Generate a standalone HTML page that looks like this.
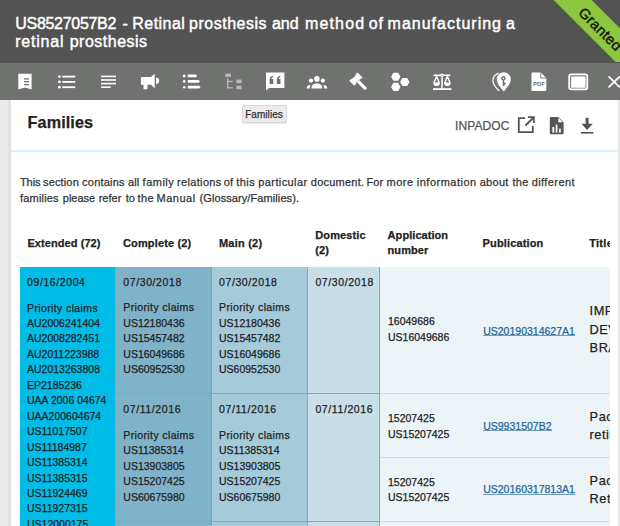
<!DOCTYPE html>
<html><head><meta charset="utf-8"><style>
html,body{margin:0;padding:0;}
body{width:620px;height:526px;overflow:hidden;position:relative;background:#fff;font-family:"Liberation Sans",sans-serif;color:#333;}
.t{position:absolute;white-space:nowrap;-webkit-text-stroke:0.25px currentColor;}
.r{position:absolute;}
</style></head><body>
<div class="r" style="left:0px;top:0px;width:620px;height:63px;background:#535353;"></div>
<div class="r" style="left:0;top:0;width:620px;height:62px;overflow:hidden"><div class="r" style="left:540px;top:14px;width:120px;height:27.4px;background:#8cc63e;transform:rotate(45deg);transform-origin:50% 50%"></div><div class="t" style="left:550px;top:20.5px;width:100px;text-align:center;font-size:14.5px;line-height:17px;color:#111;letter-spacing:0.3px;-webkit-text-stroke:0.4px #111;transform:rotate(45deg);transform-origin:50% 50%">Granted</div></div>
<div class="t" style="left:15.3px;top:13.56px;font-size:16px;line-height:19px;color:#fff;letter-spacing:-0.3px;-webkit-text-stroke:0.45px #fff;">US8527057B2</div>
<div class="t" style="left:122.5px;top:13.56px;font-size:16px;line-height:19px;color:#fff;-webkit-text-stroke:0.45px #fff;">-</div>
<div class="t" style="left:132.3px;top:13.56px;font-size:16px;line-height:19px;color:#fff;letter-spacing:0.45px;-webkit-text-stroke:0.45px #fff;">Retinal</div>
<div class="t" style="left:189.1px;top:13.56px;font-size:16px;line-height:19px;color:#fff;letter-spacing:0.5px;-webkit-text-stroke:0.45px #fff;">prosthesis</div>
<div class="t" style="left:271.9px;top:13.56px;font-size:16px;line-height:19px;color:#fff;-webkit-text-stroke:0.45px #fff;">and</div>
<div class="t" style="left:305.0px;top:13.56px;font-size:16px;line-height:19px;color:#fff;letter-spacing:1.15px;-webkit-text-stroke:0.45px #fff;">method</div>
<div class="t" style="left:368.7px;top:13.56px;font-size:16px;line-height:19px;color:#fff;letter-spacing:0.8px;-webkit-text-stroke:0.45px #fff;">of</div>
<div class="t" style="left:387.6px;top:13.56px;font-size:16px;line-height:19px;color:#fff;letter-spacing:1.0px;-webkit-text-stroke:0.45px #fff;">manufacturing</div>
<div class="t" style="left:506.0px;top:13.56px;font-size:16px;line-height:19px;color:#fff;-webkit-text-stroke:0.45px #fff;">a</div>
<div class="t" style="left:15.2px;top:31.76px;font-size:16px;line-height:19px;color:#fff;letter-spacing:0.8px;-webkit-text-stroke:0.45px #fff;">retinal</div>
<div class="t" style="left:69.7px;top:31.76px;font-size:16px;line-height:19px;color:#fff;letter-spacing:0.5px;-webkit-text-stroke:0.45px #fff;">prosthesis</div>
<div class="r" style="left:0px;top:62.5px;width:620px;height:37px;background:#70726f;"></div>
<svg class="r" style="left:0;top:0" width="620" height="100" viewBox="0 0 620 100"><path d="M18.3 73.7h13.3v15.9l-6.65-2.2-6.65 2.2z" fill="#fff"/><path d="M24 78.2h5v1.4h-5zM24 80.9h5v1.4h-5zM24 83.9h5v1.4h-5z" fill="#6f716f"/><g fill="#fff"><circle cx="59.4" cy="76.6" r="1.35"/><circle cx="59.4" cy="81.9" r="1.35"/><circle cx="59.4" cy="87.2" r="1.35"/><rect x="62.2" y="75.7" width="13" height="1.8"/><rect x="62.2" y="81" width="13" height="1.8"/><rect x="62.2" y="86.3" width="13" height="1.8"/></g><g fill="#fff"><rect x="101" y="75.6" width="15" height="1.6"/><rect x="101" y="79.2" width="15" height="1.6"/><rect x="101" y="82.8" width="15" height="1.6"/><rect x="101" y="86.4" width="9.6" height="1.6"/></g><g fill="#fff"><path d="M141.8 77.1h9.2l3.4-3.2h0.3v14.1h-0.3l-3.4-3.2h-3.6v3.6q0 .9-.9 .9h-2.1q-.9 0-.9-.9v-3.6h-1.7q-.9 0-.9-.9v-5.9q0-.9.9-.9z"/><path d="M156.1 77.5q3.1 0.3 3.1 3.3t-3.1 3.3z"/></g><g fill="#fff"><circle cx="184.2" cy="75.9" r="1.3"/><circle cx="184.2" cy="81.4" r="1.3"/><circle cx="184.2" cy="87.2" r="1.3"/><path d="M187.8 74.5h8l1.4 1.4-1.4 1.4h-8zM187.8 80h10.8l1.4 1.4-1.4 1.4h-10.8zM187.8 85.8h11.4l1.4 1.4-1.4 1.4h-11.4z"/></g><g fill="#b9bab9"><rect x="225.3" y="73.6" width="5.6" height="3.2"/><rect x="227" y="78.4" width="1.3" height="10"/><rect x="227" y="80.8" width="5.6" height="1.2"/><rect x="227" y="87.2" width="5.6" height="1.2"/><rect x="236.4" y="79.6" width="5.2" height="3.6"/><rect x="236.4" y="85.6" width="5.2" height="3.6"/></g><path d="M266 72.5h18.4v15.5h-15.3l-3.1 2.6z" fill="#fff"/><g fill="#6f716f"><path d="M269.6 84v-4.5q0-3.2 3.6-3.8v1.3q-1.7.4-1.8 2h1.9v5zM276.8 84v-4.5q0-3.2 3.6-3.8v1.3q-1.7.4-1.8 2h1.9v5z"/></g><g fill="#fff"><circle cx="316.9" cy="78.9" r="2.8"/><circle cx="311" cy="80.6" r="2.1"/><circle cx="322.8" cy="80.6" r="2.1"/><path d="M311.4 88.4q0-4.8 5.5-4.8t5.5 4.8z"/><path d="M306.6 88.4q0-3 3.4-3.4l0.3 0.1q-0.6 1.5-0.6 3.3z"/><path d="M327.2 88.4q0-3-3.4-3.4l-0.3 0.1q0.6 1.5 0.6 3.3z"/></g><g fill="#fff" transform="translate(355.9 79.1) rotate(-45)"><path d="M-5.9 -3.6h1.9q1.2 .9 4 .9t4-.9h1.9v7.2h-1.9q-1.2-.9-4-.9t-4 .9h-1.9z"/><rect x="-1.55" y="2.8" width="3.1" height="11.6" rx="0.9"/></g><path d="M400.50 76.80 L398.15 80.87 L393.45 80.87 L391.10 76.80 L393.45 72.73 L398.15 72.73ZM400.50 86.90 L398.15 90.97 L393.45 90.97 L391.10 86.90 L393.45 82.83 L398.15 82.83ZM409.50 82.00 L407.15 86.07 L402.45 86.07 L400.10 82.00 L402.45 77.93 L407.15 77.93Z" fill="#fff"/><g fill="#fff"><rect x="433.6" y="74.5" width="16.8" height="1.6"/><circle cx="442" cy="75.3" r="1.7"/><rect x="441.3" y="75" width="1.5" height="14"/><rect x="433" y="88.2" width="18.4" height="1.8"/></g><g fill="none" stroke="#fff" stroke-width="1.4" stroke-linejoin="round"><path d="M436.6 76.2l-2.6 6.6q0 2.6 2.6 2.6t2.6-2.6zM447.4 76.2l-2.6 6.6q0 2.6 2.6 2.6t2.6-2.6z"/></g><path d="M433.9 82.6h5.4q-.2 2.9-2.7 2.9t-2.7-2.9zM444.7 82.6h5.4q-.2 2.9-2.7 2.9t-2.7-2.9z" fill="#fff"/><circle cx="442" cy="75.3" r="0.6" fill="#70726f"/><path d="M503.8 72.2a7 7 0 0 1 7 7c0 4.5-4.2 8.7-7 12.2-2.8-3.5-7-7.7-7-12.2a7 7 0 0 1 7-7z" fill="#fff"/><path d="M498.5 73.2c-3.5 1.6-5.6 4-5.6 7.2 0 3.8 3.5 7.8 6.2 10.6" fill="none" stroke="#fff" stroke-width="1.3"/><g fill="#6f716f"><circle cx="503.4" cy="78.3" r="2.2"/><rect x="502.7" y="79.5" width="1.4" height="6.5"/><path d="M503.8 82l2.6 1.6-2.6 1.6z"/></g><circle cx="503.4" cy="78.3" r="0.9" fill="#fff"/><path d="M532.6 72.5h8.2l5.5 5.5v12q0 1.1-1.1 1.1h-12.6q-1.1 0-1.1-1.1v-16.4q0-1.1 1.1-1.1z" fill="#fff"/><path d="M540.8 72.5v5.5h5.5" fill="none" stroke="#6f716f" stroke-width="0.9"/><text x="538.9" y="86.3" font-family="Liberation Sans" font-weight="700" font-size="5.8" fill="#6f716f" text-anchor="middle">PDF</text><rect x="569.2" y="74.3" width="18.1" height="15" rx="2" fill="none" stroke="#fff" stroke-width="1.8"/><rect x="571.1" y="76.4" width="14.5" height="11.4" fill="#fff"/><path d="M608.6 76.4l11.2 11M619.8 76.4l-11.2 11" stroke="#fff" stroke-width="1.7" fill="none"/></svg>
<div class="r" style="left:0px;top:99.5px;width:8px;height:427px;background:#ebebeb;"></div>
<div class="r" style="left:8px;top:99.5px;width:3px;height:427px;background:#e2e2e2;"></div>
<div class="r" style="left:617.8px;top:99.5px;width:2.2px;height:427px;background:linear-gradient(to right,#f0f0f0,#dedede);"></div>
<div class="t" style="left:27.6px;top:112.59px;font-size:16.2px;line-height:19px;font-weight:700;color:#222;letter-spacing:0.1px;">Families</div>
<div class="r" style="left:242px;top:105.2px;width:42.6px;height:15.6px;background:#ececec;border:1px solid #d8d8d8;border-radius:2px;box-shadow:0 1px 1px rgba(0,0,0,.08)"></div>
<div class="t" style="left:245.2px;top:108.63px;font-size:10px;line-height:12px;letter-spacing:0.05px;">Families</div>
<div class="t" style="left:455px;top:118.54px;font-size:12px;line-height:15px;color:#555;letter-spacing:0.1px;">INPADOC</div>
<svg class="r" style="left:0;top:0" width="620" height="150" viewBox="0 0 620 150"><g fill="none" stroke="#555" stroke-width="1.8"><path d="M525 118.2h-6.2v14h14v-6.2"/><path d="M525.5 125.5l8-8M528 117.2h5.8v5.8"/></g><path d="M551 117h7.3l5.3 5.3v10.8q0 1.2-1.2 1.2h-11.4q-1.2 0-1.2-1.2v-14.9q0-1.2 1.2-1.2z" fill="#555"/><path d="M558.3 117.8v4.5h4.5z" fill="#fff"/><g fill="#fff"><rect x="552.4" y="127" width="1.8" height="5.6"/><rect x="555.7" y="124.6" width="1.8" height="8"/><rect x="559" y="128.6" width="1.8" height="4"/></g><g fill="#555"><path d="M585.6 117.8h3v6h4.2l-5.7 6.2-5.7-6.2h4.2z"/><rect x="581" y="132" width="12.4" height="1.6"/></g></svg>
<div class="r" style="left:11px;top:150px;width:607px;height:2px;background:#d5effa;"></div>
<div class="t" style="left:20.0px;top:175.34px;font-size:11px;line-height:15.5px;letter-spacing:-0.1px;">This</div>
<div class="t" style="left:43.0px;top:175.34px;font-size:11px;line-height:15.5px;letter-spacing:0.15px;">section</div>
<div class="t" style="left:82.1px;top:175.34px;font-size:11px;line-height:15.5px;letter-spacing:0.22px;">contains</div>
<div class="t" style="left:128.1px;top:175.34px;font-size:11px;line-height:15.5px;">all</div>
<div class="t" style="left:142.6px;top:175.34px;font-size:11px;line-height:15.5px;letter-spacing:0.5px;">family</div>
<div class="t" style="left:176.9px;top:175.34px;font-size:11px;line-height:15.5px;letter-spacing:0.36px;">relations</div>
<div class="t" style="left:223.7px;top:175.34px;font-size:11px;line-height:15.5px;letter-spacing:0.2px;">of</div>
<div class="t" style="left:236.2px;top:175.34px;font-size:11px;line-height:15.5px;letter-spacing:0.45px;">this</div>
<div class="t" style="left:258.3px;top:175.34px;font-size:11px;line-height:15.5px;letter-spacing:0.4px;">particular</div>
<div class="t" style="left:310.8px;top:175.34px;font-size:11px;line-height:15.5px;letter-spacing:0.23px;">document.</div>
<div class="t" style="left:366.6px;top:175.34px;font-size:11px;line-height:15.5px;">For</div>
<div class="t" style="left:386.6px;top:175.34px;font-size:11px;line-height:15.5px;letter-spacing:0.45px;">more</div>
<div class="t" style="left:416.8px;top:175.34px;font-size:11px;line-height:15.5px;letter-spacing:0.5px;">information</div>
<div class="t" style="left:479.7px;top:175.34px;font-size:11px;line-height:15.5px;letter-spacing:0.28px;">about</div>
<div class="t" style="left:512.4px;top:175.34px;font-size:11px;line-height:15.5px;letter-spacing:0.3px;">the</div>
<div class="t" style="left:531.7px;top:175.34px;font-size:11px;line-height:15.5px;letter-spacing:0.41px;">different</div>
<div class="t" style="left:20.0px;top:190.94px;font-size:11px;line-height:15.5px;letter-spacing:0.19px;">families</div>
<div class="t" style="left:62.8px;top:190.94px;font-size:11px;line-height:15.5px;">please</div>
<div class="t" style="left:98.7px;top:190.94px;font-size:11px;line-height:15.5px;">refer</div>
<div class="t" style="left:125.7px;top:190.94px;font-size:11px;line-height:15.5px;">to</div>
<div class="t" style="left:137.4px;top:190.94px;font-size:11px;line-height:15.5px;letter-spacing:0.5px;">the</div>
<div class="t" style="left:156.5px;top:190.94px;font-size:11px;line-height:15.5px;letter-spacing:0.5px;">Manual</div>
<div class="t" style="left:199.5px;top:190.94px;font-size:11px;line-height:15.5px;letter-spacing:0.09px;">(Glossary/Families).</div>
<div class="t" style="left:27.4px;top:235.84px;font-size:11px;line-height:15.5px;font-weight:700;color:#222;letter-spacing:0.08px;">Extended (72)</div>
<div class="t" style="left:123px;top:235.84px;font-size:11px;line-height:15.5px;font-weight:700;color:#222;letter-spacing:0.14px;">Complete (2)</div>
<div class="t" style="left:218.9px;top:235.84px;font-size:11px;line-height:15.5px;font-weight:700;color:#222;letter-spacing:0.24px;">Main (2)</div>
<div class="t" style="left:315.3px;top:227.84px;font-size:11px;line-height:15.5px;font-weight:700;color:#222;letter-spacing:0.1px;">Domestic</div>
<div class="t" style="left:315.3px;top:243.34px;font-size:11px;line-height:15.5px;font-weight:700;color:#222;letter-spacing:0.1px;">(2)</div>
<div class="t" style="left:387.6px;top:227.84px;font-size:11px;line-height:15.5px;font-weight:700;color:#222;letter-spacing:0.06px;">Application</div>
<div class="t" style="left:387.6px;top:243.34px;font-size:11px;line-height:15.5px;font-weight:700;color:#222;letter-spacing:0.06px;">number</div>
<div class="t" style="left:482.6px;top:235.84px;font-size:11px;line-height:15.5px;font-weight:700;color:#222;letter-spacing:0.14px;">Publication</div>
<div class="r" style="left:581px;top:225px;width:29px;height:40px;overflow:hidden">
<div class="t" style="left:8.2px;top:10.84px;font-size:11px;line-height:15.5px;font-weight:700;color:#222;letter-spacing:0.3px;">Title</div>
</div>
<div class="r" style="left:19.8px;top:266.5px;width:95.6px;height:260px;background:#00bde8;"></div>
<div class="r" style="left:115.4px;top:266.5px;width:96.4px;height:260px;background:#80b3c9;"></div>
<div class="r" style="left:211.8px;top:266.5px;width:96px;height:260px;background:#a5cbdb;"></div>
<div class="r" style="left:307.8px;top:266.5px;width:72px;height:260px;background:#c9dfe8;"></div>
<div class="r" style="left:379.8px;top:266.5px;width:230.2px;height:260px;background:#edf4f7;"></div>
<div class="r" style="left:115.4px;top:266.5px;width:1.2px;height:260px;background:#86afc2;"></div>
<div class="r" style="left:211px;top:266.5px;width:1px;height:260px;background:#75a7be;"></div>
<div class="r" style="left:307px;top:266.5px;width:1.3px;height:260px;background:#7aadc3;"></div>
<div class="r" style="left:379px;top:266.5px;width:1.4px;height:260px;background:#73a8c0;"></div>
<div class="r" style="left:115.4px;top:392.6px;width:265px;height:1px;background:#78aac1;"></div>
<div class="r" style="left:380.4px;top:392.6px;width:229.6px;height:1px;background:#c9dde6;"></div>
<div class="r" style="left:380.4px;top:456.8px;width:229.6px;height:1px;background:#c9dde6;"></div>
<div class="r" style="left:115.4px;top:521.4px;width:265px;height:1px;background:#78aac1;"></div>
<div class="r" style="left:380.4px;top:521.4px;width:229.6px;height:1px;background:#c9dde6;"></div>
<div class="t" style="left:27px;top:275.70px;font-size:10.5px;line-height:13.12px;color:#222;letter-spacing:0.6px;">09/16/2004</div>
<div class="t" style="left:27px;top:301.50px;font-size:10.5px;line-height:13.12px;color:#222;letter-spacing:0.38px;">Priority claims</div>
<div class="t" style="left:27px;top:317.00px;font-size:10.5px;line-height:13.12px;color:#222;">AU2006241404</div>
<div class="t" style="left:27px;top:332.45px;font-size:10.5px;line-height:13.12px;color:#222;">AU2008282451</div>
<div class="t" style="left:27px;top:347.90px;font-size:10.5px;line-height:13.12px;color:#222;">AU2011223988</div>
<div class="t" style="left:27px;top:363.35px;font-size:10.5px;line-height:13.12px;color:#222;">AU2013263808</div>
<div class="t" style="left:27px;top:378.80px;font-size:10.5px;line-height:13.12px;color:#222;">EP2185236</div>
<div class="t" style="left:27px;top:394.25px;font-size:10.5px;line-height:13.12px;color:#222;">UAA 2006 04674</div>
<div class="t" style="left:27px;top:409.70px;font-size:10.5px;line-height:13.12px;color:#222;">UAA200604674</div>
<div class="t" style="left:27px;top:425.15px;font-size:10.5px;line-height:13.12px;color:#222;">US11017507</div>
<div class="t" style="left:27px;top:440.60px;font-size:10.5px;line-height:13.12px;color:#222;">US11184987</div>
<div class="t" style="left:27px;top:456.05px;font-size:10.5px;line-height:13.12px;color:#222;">US11385314</div>
<div class="t" style="left:27px;top:471.50px;font-size:10.5px;line-height:13.12px;color:#222;">US11385315</div>
<div class="t" style="left:27px;top:486.95px;font-size:10.5px;line-height:13.12px;color:#222;">US11924469</div>
<div class="t" style="left:27px;top:502.40px;font-size:10.5px;line-height:13.12px;color:#222;">US11927315</div>
<div class="t" style="left:27px;top:517.85px;font-size:10.5px;line-height:13.12px;color:#222;">US12000175</div>
<div class="t" style="left:123.3px;top:275.80px;font-size:10.5px;line-height:13.12px;color:#222;letter-spacing:0.6px;">07/30/2018</div>
<div class="t" style="left:123.3px;top:301.30px;font-size:10.5px;line-height:13.12px;color:#222;letter-spacing:0.38px;">Priority claims</div>
<div class="t" style="left:123.3px;top:317.00px;font-size:10.5px;line-height:13.12px;color:#222;">US12180436</div>
<div class="t" style="left:123.3px;top:332.40px;font-size:10.5px;line-height:13.12px;color:#222;">US15457482</div>
<div class="t" style="left:123.3px;top:347.80px;font-size:10.5px;line-height:13.12px;color:#222;">US16049686</div>
<div class="t" style="left:123.3px;top:363.20px;font-size:10.5px;line-height:13.12px;color:#222;">US60952530</div>
<div class="t" style="left:123.3px;top:403.30px;font-size:10.5px;line-height:13.12px;color:#222;letter-spacing:0.6px;">07/11/2016</div>
<div class="t" style="left:123.3px;top:428.90px;font-size:10.5px;line-height:13.12px;color:#222;letter-spacing:0.38px;">Priority claims</div>
<div class="t" style="left:123.3px;top:444.40px;font-size:10.5px;line-height:13.12px;color:#222;">US11385314</div>
<div class="t" style="left:123.3px;top:459.80px;font-size:10.5px;line-height:13.12px;color:#222;">US13903805</div>
<div class="t" style="left:123.3px;top:475.20px;font-size:10.5px;line-height:13.12px;color:#222;">US15207425</div>
<div class="t" style="left:123.3px;top:490.60px;font-size:10.5px;line-height:13.12px;color:#222;">US60675980</div>
<div class="t" style="left:219px;top:275.80px;font-size:10.5px;line-height:13.12px;color:#222;letter-spacing:0.6px;">07/30/2018</div>
<div class="t" style="left:219px;top:301.30px;font-size:10.5px;line-height:13.12px;color:#222;letter-spacing:0.38px;">Priority claims</div>
<div class="t" style="left:219px;top:317.00px;font-size:10.5px;line-height:13.12px;color:#222;">US12180436</div>
<div class="t" style="left:219px;top:332.40px;font-size:10.5px;line-height:13.12px;color:#222;">US15457482</div>
<div class="t" style="left:219px;top:347.80px;font-size:10.5px;line-height:13.12px;color:#222;">US16049686</div>
<div class="t" style="left:219px;top:363.20px;font-size:10.5px;line-height:13.12px;color:#222;">US60952530</div>
<div class="t" style="left:219px;top:403.30px;font-size:10.5px;line-height:13.12px;color:#222;letter-spacing:0.6px;">07/11/2016</div>
<div class="t" style="left:219px;top:428.90px;font-size:10.5px;line-height:13.12px;color:#222;letter-spacing:0.38px;">Priority claims</div>
<div class="t" style="left:219px;top:444.40px;font-size:10.5px;line-height:13.12px;color:#222;">US11385314</div>
<div class="t" style="left:219px;top:459.80px;font-size:10.5px;line-height:13.12px;color:#222;">US13903805</div>
<div class="t" style="left:219px;top:475.20px;font-size:10.5px;line-height:13.12px;color:#222;">US15207425</div>
<div class="t" style="left:219px;top:490.60px;font-size:10.5px;line-height:13.12px;color:#222;">US60675980</div>
<div class="t" style="left:315.4px;top:275.90px;font-size:10.5px;line-height:13.12px;color:#222;letter-spacing:0.6px;">07/30/2018</div>
<div class="t" style="left:315.4px;top:403.30px;font-size:10.5px;line-height:13.12px;color:#222;letter-spacing:0.6px;">07/11/2016</div>
<div class="t" style="left:388px;top:314.90px;font-size:10.5px;line-height:13.12px;color:#222;">16049686</div>
<div class="t" style="left:388px;top:330.70px;font-size:10.5px;line-height:13.12px;color:#222;">US16049686</div>
<div class="t" style="left:388px;top:412.10px;font-size:10.5px;line-height:13.12px;color:#222;">15207425</div>
<div class="t" style="left:388px;top:427.60px;font-size:10.5px;line-height:13.12px;color:#222;">US15207425</div>
<div class="t" style="left:388px;top:475.90px;font-size:10.5px;line-height:13.12px;color:#222;">15207425</div>
<div class="t" style="left:388px;top:491.30px;font-size:10.5px;line-height:13.12px;color:#222;">US15207425</div>
<div class="t" style="left:483.2px;top:324.60px;font-size:10.5px;line-height:13.12px;color:#21679a;">US20190314627A1</div>
<div class="t" style="left:483.2px;top:419.80px;font-size:10.5px;line-height:13.12px;color:#21679a;">US9931507B2</div>
<div class="t" style="left:483.2px;top:483.20px;font-size:10.5px;line-height:13.12px;color:#21679a;">US20160317813A1</div>
<div class="r" style="left:483px;top:334.9px;width:91.5px;height:1px;background:#6d9dbb;"></div>
<div class="r" style="left:483px;top:430.3px;width:68.5px;height:1px;background:#6d9dbb;"></div>
<div class="r" style="left:483px;top:493.5px;width:91.5px;height:1px;background:#6d9dbb;"></div>
<div class="r" style="left:581px;top:266px;width:28.8px;height:260px;overflow:hidden">
<div class="t" style="left:8.6px;top:36.41px;font-size:12.8px;line-height:18.3px;color:#222;white-space:nowrap;letter-spacing:0.5px">IMPLANTABLE</div>
<div class="t" style="left:8.6px;top:54.71px;font-size:12.8px;line-height:18.3px;color:#222;white-space:nowrap;letter-spacing:0.5px">DEVICE</div>
<div class="t" style="left:8.6px;top:73.01px;font-size:12.8px;line-height:18.3px;color:#222;white-space:nowrap;letter-spacing:0.5px">BRAIN</div>
<div class="t" style="left:8.6px;top:141.61px;font-size:12.8px;line-height:18.3px;color:#222;white-space:nowrap;letter-spacing:0.5px">Packaged</div>
<div class="t" style="left:8.6px;top:159.91px;font-size:12.8px;line-height:18.3px;color:#222;white-space:nowrap;letter-spacing:0.5px">retinal</div>
<div class="t" style="left:8.6px;top:205.61px;font-size:12.8px;line-height:18.3px;color:#222;white-space:nowrap;letter-spacing:0.5px">Packaged</div>
<div class="t" style="left:8.6px;top:223.91px;font-size:12.8px;line-height:18.3px;color:#222;white-space:nowrap;letter-spacing:0.5px">Retinal</div>
</div>
</body></html>
